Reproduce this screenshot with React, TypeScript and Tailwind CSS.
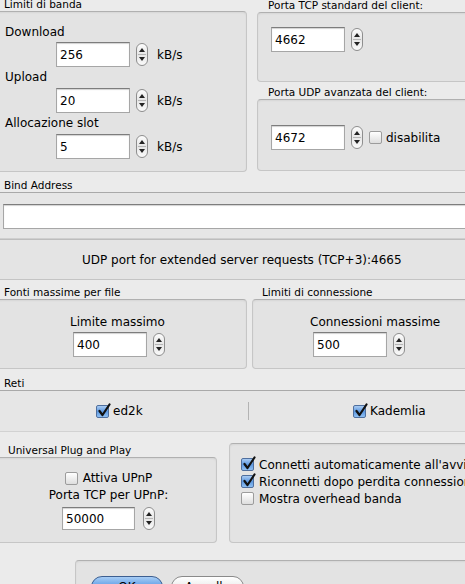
import React from "react"

const font = { fontFamily: '"DejaVu Sans", "Liberation Sans", sans-serif' }

function Field({ value, w = "w-[74px]", h = "h-[25px]" }: { value: string; w?: string; h?: string }) {
  return (
    <div
      className={`${w} ${h} flex items-center bg-white border border-[#a6a6a6] border-t-[#7d7d7d] pl-[3px] text-[12px] text-black shadow-[inset_0_1px_1px_rgba(0,0,0,0.18)]`}
    >
      {value}
    </div>
  )
}

function Stepper() {
  return (
    <div className="w-[12px] h-[23px] rounded-[6px] border border-[#8e8e8e] bg-gradient-to-b from-[#fdfdfd] via-[#e6e6e6] to-[#fafafa] flex flex-col items-center justify-between py-[4px]">
      <svg width="6" height="4" viewBox="0 0 6 4">
        <path d="M3 0 L6 4 L0 4 Z" fill="#222" />
      </svg>
      <div className="w-[8px] h-px bg-[#b5b5b5]" />
      <svg width="6" height="4" viewBox="0 0 6 4">
        <path d="M0 0 L6 0 L3 4 Z" fill="#222" />
      </svg>
    </div>
  )
}

function Check({ on = false }: { on?: boolean }) {
  if (on)
    return (
      <div className="relative w-[13px] h-[13px] rounded-[2px] border border-[#4f6f9e] bg-gradient-to-b from-[#a9cbf2] via-[#5d98e0] to-[#8fc0f3]">
        <svg className="absolute left-[1px] top-[-3px]" width="13" height="14" viewBox="0 0 13 14">
          <path d="M1.5 8 L4.5 12 L11.5 1.5" fill="none" stroke="#111" strokeWidth="2.2" strokeLinecap="round" strokeLinejoin="round" />
        </svg>
      </div>
    )
  return (
    <div className="w-[13px] h-[13px] rounded-[2px] border border-[#9c9c9c] bg-gradient-to-b from-[#ffffff] to-[#dedede]" />
  )
}

function Box({ className = "", children }: { className?: string; children?: React.ReactNode }) {
  return (
    <div
      className={`rounded-[4px] border border-[#c6c6c6] border-t-[#b0b0b0] bg-[#e3e3e3] shadow-[inset_0_1px_2px_rgba(0,0,0,0.06)] ${className}`}
    >
      {children}
    </div>
  )
}

function Caption({ children, className = "" }: { children: React.ReactNode; className?: string }) {
  return <div className={`h-[14px] leading-[14px] text-[10.5px] text-black ${className}`}>{children}</div>
}

function SpinRow({ value, unit }: { value: string; unit?: string }) {
  return (
    <div className="flex items-center">
      <Field value={value} />
      <div className="ml-[6px]">
        <Stepper />
      </div>
      {unit && <span className="ml-[9px] text-[12px]">{unit}</span>}
    </div>
  )
}

export default function App() {
  return (
    <div className="w-[465px] h-[584px] overflow-hidden bg-[#ebebeb] text-black" style={font}>
      <div className="mt-[-3px] w-[540px]">
        {/* bandwidth + client ports */}
        <div className="flex ml-[-4px] gap-[10px]">
          <div className="w-[251px]">
            <Caption className="pl-[8px]">Limiti di banda</Caption>
            <Box className="h-[161px] pl-[8px] pt-[12px]">
              <div className="h-[17px] leading-[17px] text-[12px]">Download</div>
              <div className="mt-[1px] ml-[51px]">
                <SpinRow value="256" unit="kB/s" />
              </div>
              <div className="mt-[2px] h-[17px] leading-[17px] text-[12px]">Upload</div>
              <div className="mt-[2px] ml-[51px]">
                <SpinRow value="20" unit="kB/s" />
              </div>
              <div className="mt-[2px] h-[17px] leading-[17px] text-[12px]">Allocazione slot</div>
              <div className="mt-[2px] ml-[51px]">
                <SpinRow value="5" unit="kB/s" />
              </div>
            </Box>
          </div>
          <div className="w-[240px] pt-[1px]">
            <Caption className="pl-[11px]">Porta TCP standard del client:</Caption>
            <Box className="h-[70px] pl-[13px] pt-[14px]">
              <SpinRow value="4662" />
            </Box>
            <Caption className="pl-[11px] mt-[3px]">Porta UDP avanzata del client:</Caption>
            <Box className="h-[72px] pl-[13px] pt-[25px]">
              <div className="flex items-center">
                <SpinRow value="4672" />
                <div className="ml-[6px]">
                  <Check />
                </div>
                <span className="ml-[4px] text-[12px]">disabilita</span>
              </div>
            </Box>
          </div>
        </div>

        {/* bind address */}
        <Caption className="mt-[6px] pl-[4px]">Bind Address</Caption>
        <div className="border-t border-[#a9a9a9] bg-[#e6e6e6] pt-[11px] pb-[9px] pl-[3px] border-b border-b-[#cfcfcf]">
          <Field value="" w="w-[500px]" h="h-[25px]" />
        </div>
        <div className="border-t border-[#bdbdbd] border-b border-b-[#c4c4c4] h-[41px] bg-[#e4e4e4] flex items-center">
          <span className="ml-[82px] text-[12px]">UDP port for extended server requests (TCP+3):4665</span>
        </div>

        {/* sources / connections */}
        <div className="flex ml-[-4px] gap-[5px] mt-[5px]">
          <div className="w-[251px]">
            <Caption className="pl-[8px]">Fonti massime per file</Caption>
            <Box className="h-[70px] pl-[73px] pt-[14px]">
              <div className="h-[17px] leading-[17px] text-[12px]">Limite massimo</div>
              <div className="mt-[1px] ml-[3px]">
                <SpinRow value="400" />
              </div>
            </Box>
          </div>
          <div className="w-[240px]">
            <Caption className="pl-[10px]">Limiti di connessione</Caption>
            <Box className="h-[70px] pl-[57px] pt-[14px]">
              <div className="h-[17px] leading-[17px] text-[12px]">Connessioni massime</div>
              <div className="mt-[1px] ml-[3px]">
                <SpinRow value="500" />
              </div>
            </Box>
          </div>
        </div>

        {/* networks */}
        <Caption className="mt-[7px] pl-[4px]">Reti</Caption>
        <div className="border-t border-[#a9a9a9] border-b border-b-[#d2d2d2] h-[42px] bg-[#e6e6e6] flex items-center">
          <div className="w-[248px] pl-[96px] flex items-center">
            <Check on />
            <span className="ml-[4px] text-[12px]">ed2k</span>
          </div>
          <div className="w-px h-[18px] bg-[#b3b3b3]" />
          <div className="pl-[104px] flex items-center">
            <Check on />
            <span className="ml-[4px] text-[12px]">Kademlia</span>
          </div>
        </div>

        {/* upnp + connection options */}
        <div className="flex ml-[-4px] gap-[12px]">
          <div className="w-[221px] pt-[11px]">
            <Caption className="pl-[12px]">Universal Plug and Play</Caption>
            <Box className="h-[86px] pt-[12px] pl-[4px] flex flex-col items-center">
              <div className="flex items-center h-[16px]">
                <Check />
                <span className="ml-[5px] text-[12px]">Attiva UPnP</span>
              </div>
              <div className="h-[17px] leading-[17px] text-[12px] mt-[1px]">Porta TCP per UPnP:</div>
              <div className="mt-[3px] flex items-center">
                <Field value="50000" w="w-[73px]" h="h-[23px]" />
                <div className="ml-[8px]">
                  <Stepper />
                </div>
              </div>
            </Box>
          </div>
          <Box className="mt-[11px] w-[260px] h-[100px] pl-[11px] pt-[12px]">
            {[
              { on: true, t: "Connetti automaticamente all'avvio" },
              { on: true, t: "Riconnetti dopo perdita connessione" },
              { on: false, t: "Mostra overhead banda" },
            ].map((r) => (
              <div key={r.t} className="flex items-center h-[17px] whitespace-nowrap">
                <Check on={r.on} />
                <span className="ml-[5px] text-[12px]">{r.t}</span>
              </div>
            ))}
          </Box>
        </div>

        {/* dialog buttons */}
        <Box className="ml-[75px] mt-[17px] w-[420px] h-[40px] pl-[15px] pt-[15px] flex gap-[8px] items-start">
          <div className="w-[72px] h-[22px] rounded-full border border-[#3d5f91] bg-gradient-to-b from-[#a8cdf5] via-[#5c9be5] to-[#9bd0ff] flex justify-center text-[12px] leading-[20px]">
            OK
          </div>
          <div className="w-[73px] h-[22px] rounded-full border border-[#8a8a8a] bg-gradient-to-b from-[#ffffff] via-[#ececec] to-[#ffffff] flex justify-center text-[12px] leading-[20px]">
            Annulla
          </div>
        </Box>
      </div>
    </div>
  )
}
